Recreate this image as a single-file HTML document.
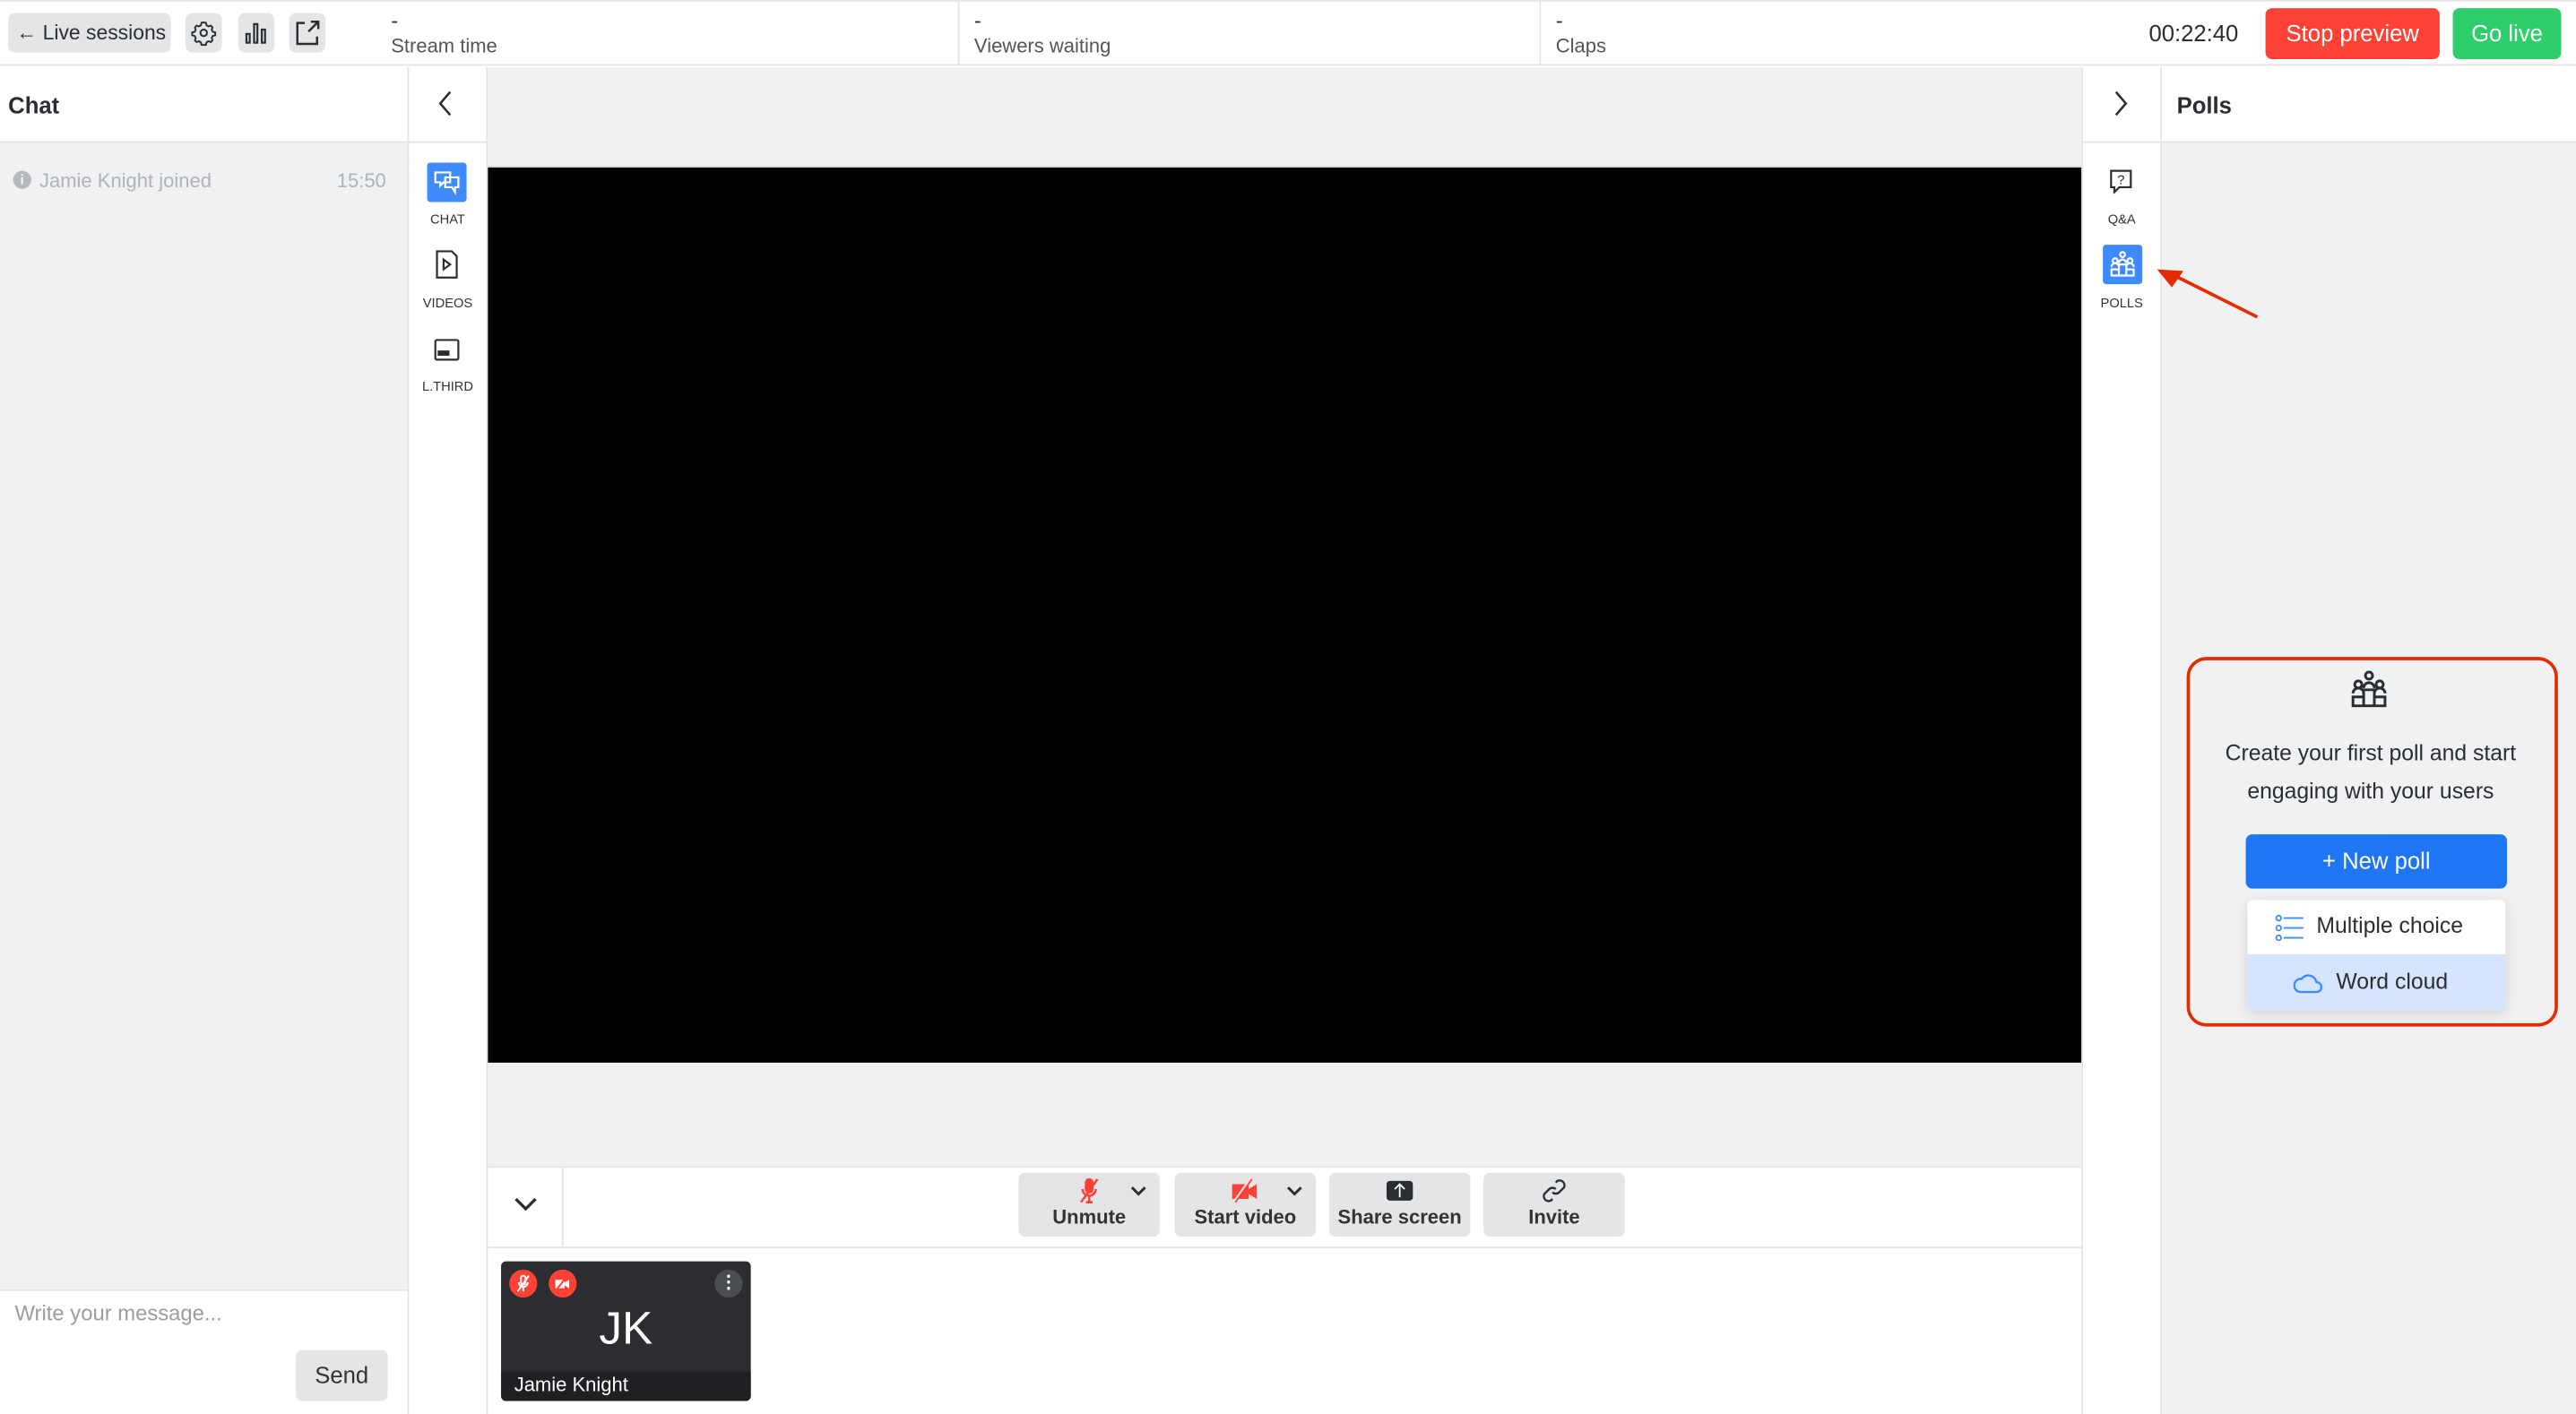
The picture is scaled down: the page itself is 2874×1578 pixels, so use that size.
<!DOCTYPE html>
<html><head><meta charset="utf-8"><style>
*{box-sizing:border-box;margin:0;padding:0}
html,body{width:2874px;height:1578px;overflow:hidden;background:#fff;font-family:"Liberation Sans",Arial,sans-serif;color:#2a2d31}
#w{position:absolute;left:0;top:0;width:1568px;height:861px;transform:scale(1.83291);transform-origin:0 0}
.a{position:absolute;white-space:nowrap}
.btn{position:absolute;background:#e4e5e7;border-radius:4px;white-space:nowrap}
.lbl{font-size:8px;color:#333;text-align:center;width:49px;position:absolute}
svg{display:block}
</style></head><body><div id="w">
<!-- top bar -->
<div class="a" style="left:0;top:0;width:1568px;height:40px;background:#fff;border-bottom:1px solid #e3e4e6;border-top:1px solid #e6e6e6"></div>
<div class="btn" style="left:5px;top:8px;width:99px;height:24px;font-size:12.5px;line-height:24px;padding-left:5px">&#8592; Live sessions</div>
<div class="btn" style="left:113px;top:8px;width:22px;height:24px"><svg class="a" style="left:3px;top:4px" width="16" height="16" viewBox="0 0 24 24" fill="none" stroke="#2a2d31" stroke-width="1.6"><circle cx="12" cy="12" r="3"/><path d="M12 2.5l2 .3.6 2.3 1.7 1 2.3-.7 1.4 1.6-.7 2.3 1 1.7 2.2.6v2.6l-2.2.6-1 1.7.7 2.3-1.4 1.6-2.3-.7-1.7 1-.6 2.3h-4l-.6-2.3-1.7-1-2.3.7-1.4-1.6.7-2.3-1-1.7-2.2-.6v-2.6l2.2-.6 1-1.7-.7-2.3 1.4-1.6 2.3.7 1.7-1 .6-2.3z"/></svg></div>
<div class="btn" style="left:145px;top:8px;width:22px;height:24px"><svg class="a" style="left:3px;top:4px" width="16" height="16" viewBox="0 0 24 24" fill="none" stroke="#2a2d31" stroke-width="1.8"><rect x="3" y="13" width="3" height="8"/><rect x="10" y="4" width="3" height="17"/><rect x="17" y="9" width="3" height="12"/></svg></div>
<div class="btn" style="left:176px;top:8px;width:22px;height:24px"><svg class="a" style="left:2px;top:3px" width="18" height="18" viewBox="0 0 24 24" fill="none" stroke="#2a2d31" stroke-width="1.8"><path d="M10 4H4v17h16v-6M13 11l8-8M15 3h6v6"/></svg></div>
<div class="a" style="left:238px;top:5px;font-size:13px;color:#333">-</div>
<div class="a" style="left:238px;top:21px;font-size:12px;color:#555">Stream time</div>
<div class="a" style="left:583px;top:0;width:1px;height:40px;background:#e3e4e6"></div>
<div class="a" style="left:593px;top:5px;font-size:13px;color:#333">-</div>
<div class="a" style="left:593px;top:21px;font-size:12px;color:#555">Viewers waiting</div>
<div class="a" style="left:937px;top:0;width:1px;height:40px;background:#e3e4e6"></div>
<div class="a" style="left:947px;top:5px;font-size:13px;color:#333">-</div>
<div class="a" style="left:947px;top:21px;font-size:12px;color:#555">Claps</div>
<div class="a" style="left:1308px;top:12px;font-size:14px;color:#2a2d31">00:22:40</div>
<div class="a" style="left:1379px;top:5px;width:106px;height:31px;background:#ff4136;border-radius:4px;color:#fff;font-size:14px;line-height:31px;text-align:center">Stop preview</div>
<div class="a" style="left:1493px;top:5px;width:66px;height:31px;background:#2ecf6b;border-radius:4px;color:#fff;font-size:14px;line-height:31px;text-align:center">Go live</div>

<!-- left chat -->
<div class="a" style="left:0;top:41px;width:248px;height:46px;background:#fff;border-bottom:1px solid #e3e4e6"></div>
<div class="a" style="left:5px;top:56px;font-size:14px;font-weight:bold">Chat</div>
<div class="a" style="left:0;top:87px;width:248px;height:698px;background:#f0f1f3"></div>
<div class="a" style="left:8px;top:104px;width:11px;height:11px;border-radius:50%;background:#b5b8bd;color:#fff;font-size:8px;text-align:center;line-height:11px;font-weight:bold">i</div>
<div class="a" style="left:24px;top:103px;font-size:12px;color:#b0b3b8">Jamie Knight joined</div>
<div class="a" style="left:205px;top:103px;font-size:12px;color:#b0b3b8">15:50</div>
<div class="a" style="left:0;top:785px;width:248px;height:76px;background:#fff;border-top:1px solid #e3e4e6"></div>
<div class="a" style="left:9px;top:792px;font-size:13px;color:#9a9da2">Write your message...</div>
<div class="btn" style="left:180px;top:822px;width:56px;height:31px;font-size:14px;line-height:31px;text-align:center;color:#333">Send</div>

<!-- left rail -->
<div class="a" style="left:248px;top:41px;width:49px;height:820px;background:#fff;border-left:1px solid #e3e4e6;border-right:1px solid #e3e4e6"></div>
<div class="a" style="left:248px;top:86px;width:49px;height:1px;background:#e3e4e6"></div>
<svg class="a" style="left:264px;top:54px" width="14" height="18" viewBox="0 0 14 18" fill="none" stroke="#2a2d31" stroke-width="1.4"><path d="M10 2L4 9l6 7"/></svg>
<div class="a" style="left:260px;top:99px;width:24px;height:24px;background:#3d8bff;border-radius:2px"></div>
<svg class="a" style="left:263px;top:102px" width="18" height="18" viewBox="0 0 18 18" fill="none" stroke="#fff" stroke-width="1.2"><path d="M2 3h9v6H7l-2 2V9H2zM8 6h8v6h-2v3l-2-3H8z"/></svg>
<div class="lbl" style="left:248px;top:129px">CHAT</div>
<svg class="a" style="left:264px;top:152px" width="16" height="18" viewBox="0 0 16 18" fill="none" stroke="#2a2d31" stroke-width="1.2"><path d="M2 1h9l3 3v13H2zM6 6l4 3-4 3z"/></svg>
<div class="lbl" style="left:248px;top:180px">VIDEOS</div>
<svg class="a" style="left:264px;top:206px" width="16" height="14" viewBox="0 0 16 14" fill="none" stroke="#2a2d31" stroke-width="1.2"><rect x="1" y="1" width="14" height="12" rx="1"/><rect x="3" y="8" width="6" height="2" fill="#2a2d31"/></svg>
<div class="lbl" style="left:248px;top:231px">L.THIRD</div>

<!-- center -->
<div class="a" style="left:297px;top:41px;width:970px;height:669px;background:#f0f1f3"></div>
<div class="a" style="left:297px;top:101px;width:970px;height:1px;background:#d8d9db"></div>
<div class="a" style="left:297px;top:102px;width:970px;height:545px;background:#000"></div>
<div class="a" style="left:297px;top:710px;width:970px;height:50px;background:#fff;border-top:1px solid #e3e4e6;border-bottom:1px solid #e3e4e6"></div>
<div class="a" style="left:342px;top:711px;width:1px;height:48px;background:#e3e4e6"></div>
<svg class="a" style="left:312px;top:727px" width="16" height="12" viewBox="0 0 16 12" fill="none" stroke="#2a2d31" stroke-width="1.8"><path d="M2 3l6 6 6-6"/></svg>
<div class="btn" style="left:620px;top:714px;width:86px;height:39px"><div class="a" style="top:20px;width:86px;text-align:center;font-size:12px;font-weight:bold;color:#333">Unmute</div>
<svg class="a" style="left:35px;top:3px" width="16" height="16" viewBox="0 0 16 16" fill="none" stroke="#ff4136" stroke-width="1.4"><rect x="6" y="1" width="4" height="8" rx="2" fill="#ff4136"/><path d="M4 7a4 4 0 008 0M8 11v4M6 15h4M3 15L13 1"/></svg>
<svg class="a" style="left:68px;top:8px" width="10" height="7" viewBox="0 0 10 7" fill="none" stroke="#2a2d31" stroke-width="1.6"><path d="M1 1l4 4 4-4"/></svg></div>
<div class="btn" style="left:715px;top:714px;width:86px;height:39px"><div class="a" style="top:20px;width:86px;text-align:center;font-size:12px;font-weight:bold;color:#333">Start video</div>
<svg class="a" style="left:34px;top:3px" width="18" height="16" viewBox="0 0 18 16" fill="none"><path d="M1 4h10v9H1zM11 7l5-3v9l-5-3z" fill="#ff4136"/><path d="M2 15L12 1" stroke="#e4e5e7" stroke-width="1.6"/><path d="M3 15L13 1" stroke="#ff4136" stroke-width="1"/></svg>
<svg class="a" style="left:68px;top:8px" width="10" height="7" viewBox="0 0 10 7" fill="none" stroke="#2a2d31" stroke-width="1.6"><path d="M1 1l4 4 4-4"/></svg></div>
<div class="btn" style="left:809px;top:714px;width:86px;height:39px"><div class="a" style="top:20px;width:86px;text-align:center;font-size:12px;font-weight:bold;color:#333">Share screen</div>
<div class="a" style="left:35px;top:5px;width:16px;height:12px;background:#2a2d31;border-radius:2px"></div><svg class="a" style="left:35px;top:5px" width="16" height="12" viewBox="0 0 16 12" fill="none" stroke="#fff" stroke-width="1"><path d="M8 10V2M5 5l3-3 3 3"/></svg></div>
<div class="btn" style="left:903px;top:714px;width:86px;height:39px"><div class="a" style="top:20px;width:86px;text-align:center;font-size:12px;font-weight:bold;color:#333">Invite</div>
<svg class="a" style="left:35px;top:3px" width="16" height="16" viewBox="0 0 16 16" fill="none" stroke="#2a2d31" stroke-width="1.3"><path d="M7 9a3 3 0 004 0l3-3a3 3 0 00-4-4L9 3M9 7a3 3 0 00-4 0L2 10a3 3 0 004 4l1-1"/></svg></div>
<div class="a" style="left:297px;top:760px;width:970px;height:101px;background:#fff"></div>
<div class="a" style="left:305px;top:768px;width:152px;height:85px;background:#2b2d31;border-radius:3px"></div>
<div class="a" style="left:305px;top:835px;width:152px;height:18px;background:#1e2023;border-radius:0 0 3px 3px"></div>
<div class="a" style="left:310px;top:773px;width:17px;height:17px;border-radius:50%;background:#ff4136"></div>
<svg class="a" style="left:313px;top:776px" width="11" height="11" viewBox="0 0 16 16" fill="none" stroke="#fff" stroke-width="1.6"><rect x="6" y="1" width="4" height="8" rx="2"/><path d="M4 7a4 4 0 008 0M8 11v4M3 15L13 1"/></svg>
<div class="a" style="left:334px;top:773px;width:17px;height:17px;border-radius:50%;background:#ff4136"></div>
<svg class="a" style="left:337px;top:777px" width="11" height="9" viewBox="0 0 18 16"><path d="M1 4h10v9H1zM11 7l5-3v9l-5-3z" fill="#fff"/><path d="M2 15L13 1" stroke="#ff4136" stroke-width="2"/></svg>
<div class="a" style="left:435px;top:773px;width:17px;height:17px;border-radius:50%;background:#4a4d52;color:#fff;font-size:11px;text-align:center;line-height:16px;font-weight:bold">&#8942;</div>
<div class="a" style="left:305px;top:793px;width:152px;text-align:center;color:#fff;font-size:28px">JK</div>
<div class="a" style="left:313px;top:836px;color:#fff;font-size:12px">Jamie Knight</div>

<!-- right rail -->
<div class="a" style="left:1267px;top:41px;width:49px;height:820px;background:#fff;border-left:1px solid #e3e4e6;border-right:1px solid #e3e4e6"></div>
<div class="a" style="left:1267px;top:86px;width:49px;height:1px;background:#e3e4e6"></div>
<svg class="a" style="left:1284px;top:54px" width="14" height="18" viewBox="0 0 14 18" fill="none" stroke="#2a2d31" stroke-width="1.4"><path d="M4 2l6 7-6 7"/></svg>
<svg class="a" style="left:1283px;top:102px" width="16" height="16" viewBox="0 0 16 16" fill="none" stroke="#2a2d31" stroke-width="1.2"><path d="M2 2h12v10H7l-3 3v-3H2z"/><text x="8" y="10" font-size="8" text-anchor="middle" fill="#2a2d31" stroke="none" font-family="Liberation Sans">?</text></svg>
<div class="lbl" style="left:1267px;top:129px">Q&amp;A</div>
<div class="a" style="left:1280px;top:149px;width:24px;height:24px;background:#3d8bff;border-radius:2px"></div>
<svg class="a" style="left:1283px;top:152px" width="18" height="18" viewBox="0 0 24 24" fill="none" stroke="#fff" stroke-width="1.6"><circle cx="12" cy="4" r="2"/><circle cx="6" cy="9" r="2"/><circle cx="18" cy="9" r="2"/><path d="M3 14a3 3 0 016 0M15 14a3 3 0 016 0M9 11a3 3 0 016 0M3 16h6v5H3zM9 12h6v9H9zM15 16h6v5h-6z"/></svg>
<div class="lbl" style="left:1267px;top:180px">POLLS</div>

<!-- polls panel -->
<div class="a" style="left:1316px;top:41px;width:252px;height:46px;background:#fff;border-bottom:1px solid #e3e4e6"></div>
<div class="a" style="left:1325px;top:56px;font-size:14px;font-weight:bold">Polls</div>
<div class="a" style="left:1316px;top:87px;width:252px;height:774px;background:#f0f1f3"></div>
<svg class="a" style="left:1310px;top:160px" width="68" height="36" viewBox="0 0 68 36"><path d="M64 33L14 8" stroke="#e52b00" stroke-width="2"/><path d="M3 4l16 1-7 10z" fill="#e52b00"/></svg>
<div class="a" style="left:1331px;top:400px;width:226px;height:225px;border:2px solid #e52b00;border-radius:12px"></div>
<svg class="a" style="left:1429px;top:407px" width="26" height="26" viewBox="0 0 24 24" fill="none" stroke="#2a2d31" stroke-width="1.5"><circle cx="12" cy="4" r="2"/><circle cx="6" cy="9" r="2"/><circle cx="18" cy="9" r="2"/><path d="M3 14a3 3 0 016 0M15 14a3 3 0 016 0M9 11a3 3 0 016 0M3 16h6v5H3zM9 12h6v9H9zM15 16h6v5h-6z"/></svg>
<div class="a" style="left:1333px;top:447px;width:220px;text-align:center;font-size:13.5px;line-height:23px;color:#2a2d31">Create your first poll and start<br>engaging with your users</div>
<div class="a" style="left:1367px;top:508px;width:159px;height:33px;background:#1f76f5;border-radius:4px;color:#fff;font-size:14px;line-height:32px;text-align:center">+ New poll</div>
<div class="a" style="left:1368px;top:548px;width:157px;height:67px;background:#fff;border-radius:3px;box-shadow:0 2px 8px rgba(0,0,0,.12);overflow:hidden">
<div class="a" style="left:0;top:0;width:157px;height:33px;font-size:13.5px;line-height:32px;padding-left:42px">Multiple choice</div>
<svg class="a" style="left:17px;top:9px" width="18" height="16" viewBox="0 0 18 16" fill="none" stroke="#3d8bff" stroke-width="1"><circle cx="2" cy="2" r="1.5"/><circle cx="2" cy="8" r="1.5"/><circle cx="2" cy="14" r="1.5"/><path d="M5 2h12M5 8h12M5 14h12"/></svg>
<div class="a" style="left:0;top:33px;width:157px;height:34px;background:#d5e5fd;font-size:13.5px;line-height:34px;padding-left:54px">Word cloud</div>
<svg class="a" style="left:28px;top:43px" width="18" height="14" viewBox="0 0 18 14" fill="none" stroke="#3d8bff" stroke-width="1.3"><path d="M4 13h10a3 3 0 000-6 5 5 0 00-9-2A4 4 0 004 13z"/></svg>
</div>
</div></body></html>
